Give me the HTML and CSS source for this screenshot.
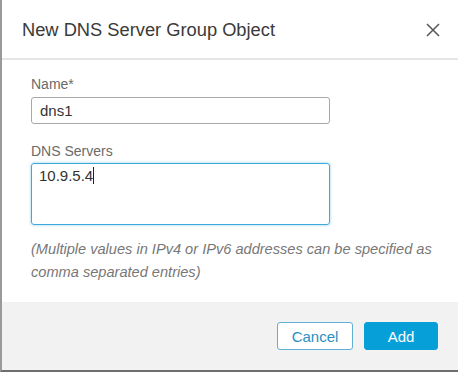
FILE: index.html
```html
<!DOCTYPE html>
<html lang="en">
<head>
  <meta charset="UTF-8">
  <title>New DNS Server Group Object</title>
  <link rel="stylesheet" href="styles.css">
</head>
<body>
  <div class="dialog">
    <div class="dialog-header">
      <div class="dialog-title">New DNS Server Group Object</div>
      <svg class="close" width="14" height="14" viewBox="0 0 14 14">
        <path d="M1 1 L13 13 M13 1 L1 13" stroke="#555" stroke-width="1.5" fill="none"/>
      </svg>
    </div>

    <div class="dialog-body">
      <label class="field-label">Name*</label>
      <div class="text-input">dns1</div>

      <label class="field-label second">DNS Servers</label>
      <div class="text-area">10.9.5.4<span class="caret"></span></div>

      <p class="hint">(Multiple values in IPv4 or IPv6 addresses can be specified as comma separated entries)</p>
    </div>

    <div class="dialog-footer">
      <button class="btn btn-cancel">Cancel</button>
      <button class="btn btn-add">Add</button>
    </div>
  </div>
</body>
</html>
```

FILE: styles.css
```css
/* 기본 스타일 */
body {
  margin: 0;
  font-family: "Liberation Sans", Arial, sans-serif;
  background-color: #ffffff;
}

.dialog {
  width: 458px;
  height: 372px;
  box-sizing: border-box;
  border-left: 2px solid #9a9a9a;
  border-bottom: 2px solid #6e6e6e;
  display: flex;
  flex-direction: column;
  background-color: #ffffff;
}

/* 헤더 */
.dialog-header {
  height: 58px;
  display: flex;
  align-items: center;
  justify-content: space-between;
  padding: 0 18px 0 20px;
  border-bottom: 2px solid #e6e6e6;
}

.dialog-title {
  font-size: 18.3px;
  color: #3a3a3a;
  padding-top: 2px;
}

.close {
  margin-top: 2px;
}

/* 본문 */
.dialog-body {
  flex: 1;
  padding: 16px 0 0 29px;
}

.field-label {
  display: block;
  font-size: 14px;
  color: #6a6a6a;
  margin-bottom: 5px;
}

.field-label.second {
  margin-top: 19px;
  margin-bottom: 4px;
}

.text-input {
  width: 299px;
  height: 27px;
  box-sizing: border-box;
  border: 1px solid #a8a8a8;
  border-radius: 3px;
  padding: 0 8px;
  font-size: 15px;
  line-height: 25px;
  color: #333;
}

.text-area {
  width: 299px;
  height: 62px;
  box-sizing: border-box;
  border: 1px solid #3fa9dc;
  border-radius: 3px;
  box-shadow: 0 0 3px rgba(63, 169, 220, 0.6);
  padding: 3px 7px;
  font-size: 15px;
  line-height: 18px;
  color: #333;
}

.caret {
  display: inline-block;
  width: 1px;
  height: 17px;
  background-color: #222;
  vertical-align: -3px;
}

.hint {
  margin: 13px 0 0 0;
  width: 415px;
  font-size: 14.6px;
  font-style: italic;
  line-height: 23px;
  color: #777;
}

/* 푸터 */
.dialog-footer {
  height: 68px;
  background-color: #f2f2f2;
  display: flex;
  justify-content: flex-end;
  align-items: center;
  gap: 11px;
  padding: 0 20px 0 0;
}

.btn {
  font-family: "Liberation Sans", Arial, sans-serif;
  height: 28px;
  font-size: 15px;
  border-radius: 3px;
  cursor: pointer;
}

.btn-cancel {
  width: 76px;
  background-color: #ffffff;
  border: 1px solid #5fb0d4;
  color: #2b8fc2;
}

.btn-add {
  width: 74px;
  background-color: #079fd8;
  border: 1px solid #079fd8;
  color: #ffffff;
}
```
